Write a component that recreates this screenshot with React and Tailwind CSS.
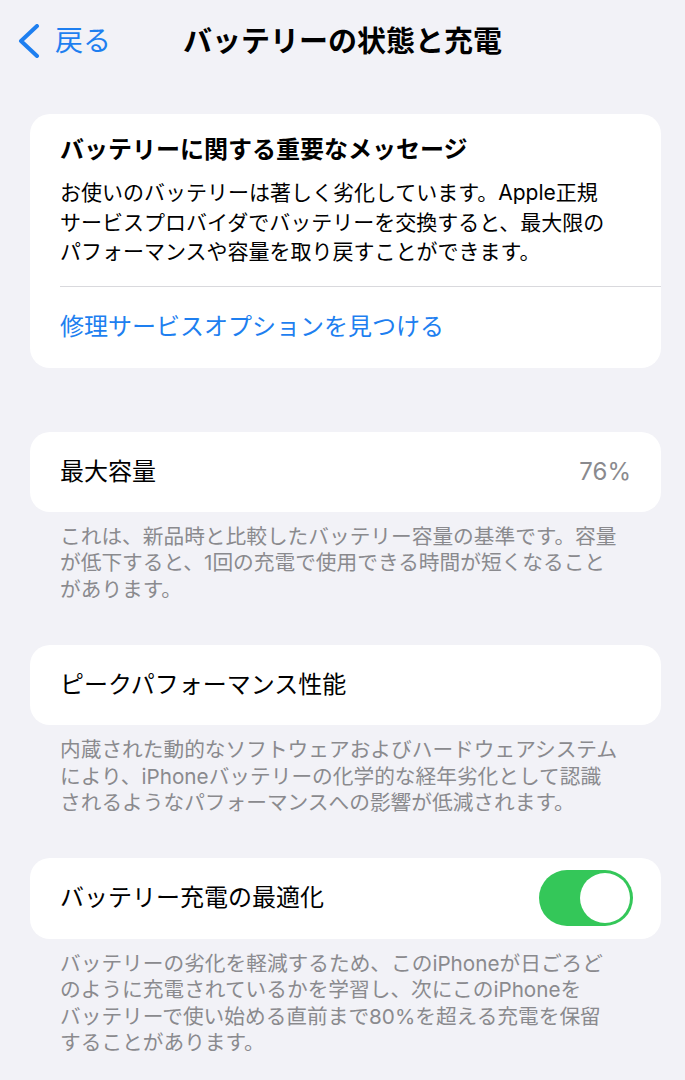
import React from 'react';

const font = "font-['Inter','Noto_Sans_CJK_JP',sans-serif]";

const Footer = ({ lines }) => (
  <div className="pl-[60px] pt-[12px] text-[20.7px] leading-[26.5px] text-[#8a8a8e]">
    {lines.map((line, i) => (
      <div key={i} className="whitespace-nowrap">{line}</div>
    ))}
  </div>
);

const Row = ({ children }) => (
  <div className="h-[80px] bg-white rounded-[20px] flex items-center justify-between pl-[30px] pr-[30px]">
    {children}
  </div>
);

const Toggle = () => (
  <div className="w-[94px] h-[56px] rounded-full bg-[#34c759] flex items-center justify-end pr-[3px]">
    <div className="w-[50px] h-[50px] rounded-full bg-white" />
  </div>
);

export default function App() {
  return (
    <div className={`min-h-[1080px] w-[685px] bg-[#f2f2f7] ${font} text-black`}>
      {/* nav bar */}
      <div className="h-[82px] grid grid-cols-[1fr_auto_1fr] items-center">
        <div className="flex items-center pl-[17px] text-[#1e7ff0]">
          <svg width="24" height="34" viewBox="0 0 24 34" fill="none">
            <polyline points="20,2 4,17 20,32" stroke="currentColor" strokeWidth="4" strokeLinecap="round" strokeLinejoin="round" />
          </svg>
          <span className="ml-[14px] text-[28px] leading-none">戻る</span>
        </div>
        <h1 className="text-[29px] font-bold leading-none">バッテリーの状態と充電</h1>
        <div />
      </div>

      <div className="pl-[30px] pr-[24px]">
        {/* message card */}
        <div className="mt-[32px] bg-white rounded-[20px]">
          <div className="pl-[30px] pr-[30px] pt-[21px] pb-[19px]">
            <h2 className="text-[24px] leading-[30px] font-bold">バッテリーに関する重要なメッセージ</h2>
            <div className="mt-[13px] text-[21px] leading-[29.5px]">
              <div className="whitespace-nowrap">お使いのバッテリーは著しく劣化しています。Apple正規</div>
              <div className="whitespace-nowrap">サービスプロバイダでバッテリーを交換すると、最大限の</div>
              <div className="whitespace-nowrap">パフォーマンスや容量を取り戻すことができます。</div>
            </div>
          </div>
          <div className="ml-[30px] h-px bg-[#d9d9dd]" />
          <div className="h-[81px] flex items-center pl-[30px] text-[24px] text-[#1e7ff0]">
            修理サービスオプションを見つける
          </div>
        </div>
      </div>

      {/* max capacity */}
      <div className="mt-[64px]">
        <div className="pl-[30px] pr-[24px]">
          <Row>
            <span className="text-[24px]">最大容量</span>
            <span className="text-[24px] text-[#8a8a8e]">76%</span>
          </Row>
        </div>
        <Footer
          lines={[
            'これは、新品時と比較したバッテリー容量の基準です。容量',
            'が低下すると、1回の充電で使用できる時間が短くなること',
            'があります。',
          ]}
        />
      </div>

      {/* peak performance */}
      <div className="mt-[42px]">
        <div className="pl-[30px] pr-[24px]">
          <Row>
            <span className="text-[24px]">ピークパフォーマンス性能</span>
          </Row>
        </div>
        <Footer
          lines={[
            '内蔵された動的なソフトウェアおよびハードウェアシステム',
            'により、iPhoneバッテリーの化学的な経年劣化として認識',
            'されるようなパフォーマンスへの影響が低減されます。',
          ]}
        />
      </div>

      {/* optimized charging */}
      <div className="mt-[41px]">
        <div className="pl-[30px] pr-[24px]">
          <div className="h-[81px] bg-white rounded-[20px] flex items-center justify-between pl-[30px] pr-[28px]">
            <span className="text-[24px]">バッテリー充電の最適化</span>
            <Toggle />
          </div>
        </div>
        <Footer
          lines={[
            'バッテリーの劣化を軽減するため、このiPhoneが日ごろど',
            'のように充電されているかを学習し、次にこのiPhoneを',
            'バッテリーで使い始める直前まで80%を超える充電を保留',
            'することがあります。',
          ]}
        />
      </div>
    </div>
  );
}
